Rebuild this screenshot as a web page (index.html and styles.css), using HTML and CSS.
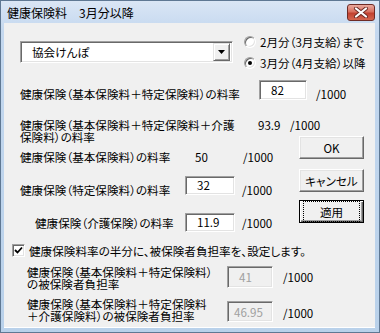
FILE: index.html
```html
<!DOCTYPE html>
<html lang="ja">
<head>
<meta charset="utf-8">
<title>健康保険料 3月分以降</title>
<link rel="stylesheet" href="styles.css">
</head>
<body>

<div class="window">
  <div class="titlebar">
    <span class="title">健康保険料　3月分以降</span>
    <span class="close">
      <svg width="16" height="11" viewBox="0 0 16 11">
        <path d="M3 1.5l10 8M13 1.5l-10 8" stroke="#6b2a24" stroke-width="4" stroke-linecap="round"/>
        <path d="M3 1.5l10 8M13 1.5l-10 8" stroke="#fff" stroke-width="2.2" stroke-linecap="round"/>
      </svg>
    </span>
  </div>

  <div class="client">
    <!-- insurer + period -->
    <div class="top">
      <div class="combo">
        <span class="combo-text">協会けんぽ</span>
        <span class="drop"><svg width="7" height="4" viewBox="0 0 7 4"><path d="M0 0h7L3.5 4z"/></svg></span>
      </div>
      <div class="radios">
        <div class="radio"><span class="dot"></span>2月分（3月支給）まで</div>
        <div class="radio on"><span class="dot"></span>3月分（4月支給）以降</div>
      </div>
    </div>

    <div class="row r1">
      <span class="label">健康保険（基本保険料＋特定保険料）の料率</span>
      <span class="edit">82</span>
      <span class="unit">/1000</span>
    </div>

    <div class="main">
      <div class="fields">
        <div class="row r2">
          <span class="label">健康保険（基本保険料＋特定保険料＋介護<br>保険料）の料率</span>
          <span class="value">93.9</span>
          <span class="unit">/1000</span>
        </div>
        <div class="row r3">
          <span class="label">健康保険（基本保険料）の料率</span>
          <span class="value">50</span>
          <span class="unit">/1000</span>
        </div>
        <div class="row r4">
          <span class="label">健康保険（特定保険料）の料率</span>
          <span class="edit">32</span>
          <span class="unit">/1000</span>
        </div>
        <div class="row r5">
          <span class="label">健康保険（介護保険）の料率</span>
          <span class="edit">11.9</span>
          <span class="unit">/1000</span>
        </div>
      </div>
      <div class="buttons">
        <span class="btn ok">OK</span>
        <span class="btn cancel">キャンセル</span>
        <span class="btn apply default"><span class="focus">適用</span></span>
      </div>
    </div>

    <div class="check-row">
      <span class="check"><svg width="9" height="9" viewBox="0 0 9 9"><path d="M1 4l2.5 2.5L8 1.5" fill="none" stroke="#000" stroke-width="1.8"/></svg></span>
      <span>健康保険料率の半分に、被保険者負担率を、設定します。</span>
    </div>

    <div class="row r6">
      <span class="label">健康保険（基本保険料＋特定保険料）<br>の被保険者負担率</span>
      <span class="edit disabled">41</span>
      <span class="unit">/1000</span>
    </div>
    <div class="row r7">
      <span class="label">健康保険（基本保険料＋特定保険料<br>＋介護保険料）の被保険者負担率</span>
      <span class="edit disabled wide">46.95</span>
      <span class="unit">/1000</span>
    </div>
  </div>
</div>

</body>
</html>
```

FILE: styles.css
```css
*{box-sizing:border-box}
body{margin:0;background:#fff;color:#000;
     font-family:"Noto Sans CJK JP","Noto Sans",sans-serif;font-size:11.6px;line-height:12px;
     font-feature-settings:"palt"}

/* window frame */
.window{width:380px;height:333px;display:flex;flex-direction:column;
        padding:0 4px 4px 3px;border:1px solid #5f7893;
        background:linear-gradient(#dae6f5,#c4d8ef 30px,#b9d1ea)}
.titlebar{height:22px;flex-shrink:0;display:flex;align-items:center;justify-content:space-between;padding:0 0 0 3px}
.title{font-size:12px;line-height:14px;margin-top:1px;font-feature-settings:normal}
.close{width:28px;height:17px;margin-top:1px;display:flex;align-items:center;justify-content:center;
       border:1px solid #6e2b25;border-radius:3px;
       background:linear-gradient(#e9a99e,#d8705f 45%,#c24130 55%,#d4664f)}
.client{flex:1;background:#f0f0f0;border-bottom:1px solid #fff}

/* top: combo + radios */
.top{display:flex;align-items:center;padding:8px 0 0 16px;height:50px}
.combo{width:213px;height:22px;display:flex;align-items:center;justify-content:space-between;
       background:#fff;border:1px solid;border-color:#a0a0a0 #fff #fff #a0a0a0;
       box-shadow:inset 1px 1px 0 #696969,inset -1px -1px 0 #e3e3e3;padding:2px 2px 2px 11px}
.drop{width:17px;height:18px;display:flex;align-items:center;justify-content:center;background:#f0f0f0;
      border:1px solid;border-color:#e3e3e3 #696969 #696969 #e3e3e3;box-shadow:inset 1px 1px 0 #fff,inset -1px -1px 0 #a0a0a0}
.radios{margin-left:11px;display:flex;flex-direction:column}
.radio{height:21px;display:flex;align-items:center;gap:4px}
.dot{width:12px;height:12px;border-radius:50%;background:#fff;display:flex;align-items:center;justify-content:center;
     border:1px solid;border-color:#a0a0a0 #fff #fff #a0a0a0;box-shadow:inset 1px 1px 0 #696969,inset -1px -1px 0 #e3e3e3}
.radio.on .dot::after{content:"";width:4px;height:4px;border-radius:50%;background:#000}

/* form rows */
.row{display:flex;align-items:flex-start;padding-left:16px}
.row > *{flex-shrink:0;white-space:nowrap}
.edit{display:block;background:#fff;padding:3px 0 0 11px;
      border:1px solid;border-color:#a0a0a0 #fff #fff #a0a0a0;
      box-shadow:inset 1px 1px 0 #696969,inset -1px -1px 0 #e3e3e3}
.edit.disabled{background:#f0f0f0;color:#a0a0a0;padding-top:4px}
.edit.wide{padding-left:6px}

.r1{margin-top:7px}
.r1 .label{width:239px;margin-top:8px}
.r1 .edit{width:48px;height:20px}
.r1 .unit{margin:8px 0 0 9px}

.main{display:flex;margin-top:19px}
.fields{width:295px;flex-shrink:0}
.r2 .label{width:238px}
.r2 .value{width:32px}
.r3{margin-top:8px}
.r3 .label{width:175px}
.r3 .value{width:48px}
.r4{margin-top:13px}
.r4 .label{width:165px;margin-top:8px}
.r4 .edit,.r5 .edit{width:50px;height:19px;padding-top:2px}
.r4 .unit{margin:8px 0 0 7px}
.r5{margin-top:17px}
.r5 .label{width:165px;padding-left:15px;margin-top:4px}
.r5 .unit{margin:4px 0 0 7px}

/* buttons */
.buttons{display:flex;flex-direction:column;width:65px}
.btn{height:23px;display:flex;align-items:center;justify-content:center;background:#f0f0f0;
     border:1px solid;border-color:#fff #696969 #696969 #fff;box-shadow:inset -1px -1px 0 #a0a0a0,inset 1px 1px 0 #e3e3e3}
.ok{margin-top:17px}
.cancel{margin-top:10px}
.apply{margin-top:8px}
.btn.default{border-color:#000;box-shadow:inset 1px 1px 0 #fff,inset -1px -1px 0 #696969,inset -2px -2px 0 #a0a0a0}
.focus{width:100%;height:100%;margin:3px;display:flex;align-items:center;justify-content:center;border:1px dotted #000}

/* checkbox */
.check-row{display:flex;align-items:center;gap:4px;padding-left:8px;margin-top:12px}
.check{width:13px;height:13px;display:flex;align-items:center;justify-content:center;background:#fff;
       border:1px solid;border-color:#a0a0a0 #fff #fff #a0a0a0;box-shadow:inset 1px 1px 0 #696969,inset -1px -1px 0 #e3e3e3}

.r6{margin-top:9px;padding-left:23px}
.r6 .label,.r7 .label{width:200px}
.r6 .edit{width:46px;height:22px}
.r6 .unit{margin:5px 0 0 10px}
.r7{margin-top:8px;padding-left:23px}
.r7 .edit{width:46px;height:21px;margin-top:3px}
.r7 .unit{margin:9px 0 0 10px}
```
